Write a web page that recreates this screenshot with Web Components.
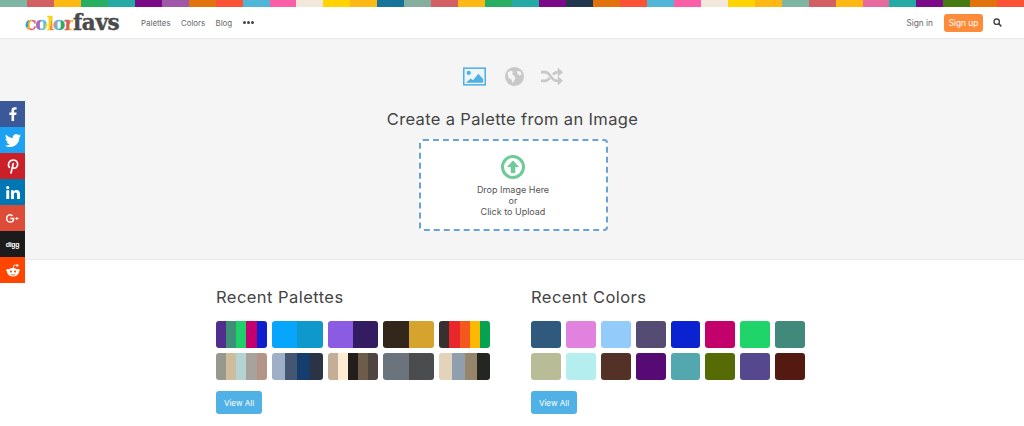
<!DOCTYPE html>
<html lang="en"><head><meta charset="utf-8"><title>colorfavs</title>
<style>
html,body{margin:0;padding:0;background:#fff;font-family:Inter,"Liberation Sans",sans-serif;color:#555}
</style></head><body>
<color-bar></color-bar>
<site-nav></site-nav>
<social-rail></social-rail>
<hero-panel></hero-panel>
<recent-area>
  <recent-block heading="Recent Palettes" cols="5">
    <palette-chip colors="#512d8e,#3f8e78,#1fd06a,#c4006f,#0f1fd0"></palette-chip>
    <palette-chip colors="#07a5fb,#0e98cc"></palette-chip>
    <palette-chip colors="#8c5be3,#341c63"></palette-chip>
    <palette-chip colors="#33261a,#d6a32f"></palette-chip>
    <palette-chip colors="#38302e,#e8262b,#f4581f,#fdb900,#05a350"></palette-chip>
    <palette-chip colors="#97998f,#cdbd9d,#b5d3d0,#a8a29d,#b59488"></palette-chip>
    <palette-chip colors="#9eafc7,#435772,#153e6e,#2a3444"></palette-chip>
    <palette-chip colors="#c4ae96,#fbecd3,#211e1c,#6e5c4b,#4f4441"></palette-chip>
    <palette-chip colors="#6b747c,#4a4c4e"></palette-chip>
    <palette-chip colors="#e3d3bb,#909fad,#96856a,#242622"></palette-chip>
  </recent-block>
  <recent-block heading="Recent Colors" cols="8">
    <palette-chip colors="#2f5a7e"></palette-chip>
    <palette-chip colors="#e282df"></palette-chip>
    <palette-chip colors="#93ccfa"></palette-chip>
    <palette-chip colors="#544c73"></palette-chip>
    <palette-chip colors="#0a22cf"></palette-chip>
    <palette-chip colors="#c4006c"></palette-chip>
    <palette-chip colors="#1fd469"></palette-chip>
    <palette-chip colors="#41897a"></palette-chip>
    <palette-chip colors="#b9bd97"></palette-chip>
    <palette-chip colors="#b5eeee"></palette-chip>
    <palette-chip colors="#543127"></palette-chip>
    <palette-chip colors="#560a74"></palette-chip>
    <palette-chip colors="#53a7ae"></palette-chip>
    <palette-chip colors="#566b05"></palette-chip>
    <palette-chip colors="#56488f"></palette-chip>
    <palette-chip colors="#541a12"></palette-chip>
  </recent-block>
</recent-area>
<script>
function def(name, html, init){
  customElements.define(name, class extends HTMLElement{
    connectedCallback(){
      if(this.shadowRoot) return;
      const r=this.attachShadow({mode:'open'});
      r.innerHTML=html;
      if(init) init.call(this,r);
    }
  });
}
def('color-bar',`<style>:host{display:flex;height:7px}i{flex:1 1 0;display:block}</style>`,function(r){
  const c=['#7fb5a3','#d25f62','#fdb813','#27ae60','#23aaa5','#7a0a88','#a058a8','#e2730c','#fb5236','#4fb6d8','#fb5fa8','#f1e7da','#ffd400','#fdb813','#14749c','#86ae9f','#d25f62','#fdb813','#27ae60','#23aaa5','#7a0a88','#22364d','#e2730c','#fb5236','#4fb6d8','#fb5fa8','#f1e7da','#ffd400','#fdb813','#7fb5a3','#d25f62','#fdb813','#e86a9c','#23aaa5','#7a0a88','#477a13','#e2730c','#fb5236'];
  c.forEach(x=>{const i=document.createElement('i');i.style.background=x;r.appendChild(i);});
});
def('site-nav',`<style>
:host{display:flex;align-items:center;height:31px;background:#fff;border-bottom:1px solid #e8e8e8;padding:0 22px 0 25px;font:8.300px Inter,"Liberation Sans",sans-serif;color:#666}
.logo{font:700 21.500px "DejaVu Serif",serif;letter-spacing:-.35px;color:#4a4a4a;width:116px;line-height:31px;white-space:nowrap;-webkit-text-stroke:.4px #4a4a4a}
.logo b{font-size:19px;letter-spacing:-1.250px;font-weight:700;-webkit-text-stroke:.4px transparent;background:linear-gradient(100deg,#2f9fd8 0 10%,#f2b01e 10% 16%,#e9577a 16% 26%,#a368c4 26% 34%,#5cc4e0 34% 44%,#f7d21a 44% 54%,#f08a3c 54% 62%,#6db1e0 62% 72%,#27ae60 72% 80%,#d25f62 80% 90%,#f2b01e 90%);-webkit-background-clip:text;background-clip:text;color:transparent}
a{color:#666;text-decoration:none}
.links{display:flex;gap:10.300px;align-items:center;font-size:7.900px}
.dots{display:flex;gap:1px;margin-left:1px}.dots i{width:3px;height:3px;border-radius:50%;background:#444}
.right{margin-left:auto;display:flex;align-items:center}
.up{background:#fd8b39;color:#fff;border-radius:3px;height:18px;width:39px;display:flex;align-items:center;justify-content:center;margin:0 10px 0 11px}
svg{display:block}
</style>
<div class="logo"><b>color</b>favs</div>
<div class="links"><a>Palettes</a><a>Colors</a><a>Blog</a><span class="dots"><i></i><i></i><i></i></span></div>
<div class="right"><a>Sign in</a><a class="up">Sign up</a>
<svg width="9" height="9" viewBox="0 0 8 8"><circle cx="3.300" cy="3.300" r="2.400" fill="none" stroke="#444" stroke-width="1.200"/><path d="M5 5l2.400 2.400" stroke="#444" stroke-width="1.400"/></svg></div>`);
def('social-rail',`<style>
:host{position:fixed;left:0;top:101px;width:25px;display:block}
div{height:26px;display:flex;align-items:center;justify-content:center;color:#fff}
span{font:700 7px "Liberation Sans",sans-serif;letter-spacing:-.3px}
</style>
<div style="background:#3b5998"><svg width="8" height="14" viewBox="0 0 8 14"><path fill="#fff" d="M2.500 14V8H.4V5.500h2.100V3.600C2.500 1.400 3.800.3 5.700.3c.9 0 1.700.1 1.900.1v2.200H6.300c-1 0-1.200.5-1.200 1.200v1.700h2.500L7.200 8H5.100v6z"/></svg></div>
<div style="background:#1da1f2"><svg width="16" height="13" viewBox="0 0 16 13"><path fill="#fff" d="M16 1.600c-.6.3-1.200.4-1.900.5.700-.4 1.200-1 1.400-1.800-.6.400-1.300.7-2.100.8A3.300 3.300 0 0 0 7.800 4.100C5.100 4 2.700 2.700 1.100.6.200 2.100.7 4 2.100 5c-.5 0-1-.2-1.500-.4 0 1.600 1.100 3 2.600 3.300-.5.100-1 .1-1.500 0 .4 1.300 1.600 2.200 3.100 2.300A6.600 6.600 0 0 1 0 11.500 9.300 9.300 0 0 0 14.400 3.300c.6-.5 1.200-1 1.600-1.700z"/></svg></div>
<div style="background:#cb2027"><svg width="12" height="15" viewBox="0 0 12 15"><path fill="none" stroke="#fff" stroke-width="1.700" stroke-linecap="round" d="M2.300 8.300C.8 6.500 1.200 1.200 6.200 1c4.300-.1 5 4 3.900 6.300-1 2.200-3.500 2.500-4.300 1M6.200 4.700L4 14"/></svg></div>
<div style="background:#0077b5"><svg width="14" height="13" viewBox="0 0 14 13"><path fill="#fff" d="M.3 4.300h2.900V13H.3zM1.700 0a1.600 1.600 0 1 1 0 3.200 1.600 1.600 0 0 1 0-3.200zM5 4.300h2.700v1.200c.5-.8 1.500-1.400 2.800-1.400 2.800 0 3.500 1.800 3.500 4.300V13h-2.900V8.800c0-1.200-.3-2.200-1.500-2.200S7.900 7.500 7.900 8.700V13H5z"/></svg></div>
<div style="background:#dd4b39"><svg width="13" height="9" viewBox="0 0 13 9"><path fill="none" stroke="#fff" stroke-width="1.500" d="M6.500 2C6 1.200 5.200.8 4.300.8a3.600 3.600 0 1 0 0 7.300c2 0 3.300-1.400 3.300-3.600H4.300"/><path stroke="#fff" d="M9.300 4.500h3.200M10.900 3v3"/></svg></div>
<div style="background:#1b1b1b"><span>digg</span></div>
<div style="background:#ff4500"><svg width="14" height="13" viewBox="0 0 14 13"><ellipse cx="7" cy="8.300" rx="5.800" ry="4.200" fill="#fff"/><circle cx="1.700" cy="6.300" r="1.400" fill="#fff"/><circle cx="12.300" cy="6.300" r="1.400" fill="#fff"/><circle cx="11.300" cy="1.400" r="1.200" fill="#fff"/><path d="M7 4.500L8 1l3 .5" stroke="#fff" fill="none" stroke-width=".8"/><circle cx="4.900" cy="7.500" r="1.100" fill="#ff4500"/><circle cx="9.100" cy="7.500" r="1.100" fill="#ff4500"/><path d="M4.700 10.300c1.300.9 3.300.9 4.600 0" stroke="#ff4500" fill="none" stroke-width=".8"/></svg></div>`);
def('hero-panel',`<style>
:host{display:flex;flex-direction:column;align-items:center;height:220px;background:#f5f5f5;border-bottom:1px solid #eaeaea}
.tabs{display:flex;align-items:center;margin:27px 0 0 2px;height:20px}
.tabs svg:nth-child(2){margin:0 17px 0 19px}
h1{margin:23px 0 0 1px;font:400 16.500px/20px Inter,"Liberation Sans",sans-serif;letter-spacing:.35px;color:#444;white-space:nowrap}
.drop{box-sizing:border-box;margin:10px 0 0 2px;width:189px;height:92px;background:#fff;border:2px dashed #67a3da;border-radius:4px;display:flex;flex-direction:column;align-items:center;padding-top:14px;font:9px/11px Inter,"Liberation Sans",sans-serif;color:#555;text-align:center}
.drop svg{margin-bottom:5px}
svg{display:block}
</style>
<div class="tabs">
<svg width="23" height="19" viewBox="0 0 24 19"><rect x=".8" y=".8" width="22.400" height="17.400" fill="#eef6fb" stroke="#4fb0e4" stroke-width="1.600"/><circle cx="6" cy="5.800" r="2.200" fill="#4fb0e4"/><path fill="#4fb0e4" d="M3 16l5-4.500 2.500 2L16 6.500 21 12v4z"/></svg>
<svg width="19" height="19" viewBox="0 0 19 19"><circle cx="9.500" cy="9.500" r="9.500" fill="#c8c8c8"/><path fill="#f5f5f5" d="M2.500 5.500L6 3.500l2 1.500-1 2 2 1.500 1.500 2.500-1.500 3-1.500 2-1-3.500-3-1.500zM12 4l3.500.5 1 3-2 1-2-1.500z"/></svg>
<svg width="22" height="19" viewBox="0 0 23 19"><path fill="none" stroke="#c8c8c8" stroke-width="2.800" d="M0 5h4c4 0 5 3 6.500 5s3 4 6.500 4h1M0 14h4c2.500 0 3.800-1.300 5-3M12.500 7.500C13.700 6 15 5 17.500 5h1"/><path fill="#c8c8c8" d="M17.500 0L23 5l-5.500 5zM17.500 9L23 14l-5.500 5z"/></svg>
</div>
<h1>Create a Palette from an Image</h1>
<div class="drop">
<svg width="24" height="24" viewBox="0 0 24 24"><circle cx="12" cy="12" r="10.500" fill="none" stroke="#6ccb98" stroke-width="3"/><path fill="#6ccb98" d="M12 5.500L18 12h-3.700v6H9.700v-6H6z"/></svg>
<div>Drop Image Here</div><div>or</div><div>Click to Upload</div>
</div>`);
def('recent-area',`<style>:host{display:flex;justify-content:flex-start;gap:41px;padding:27px 0 0 216px}</style><slot></slot>`);
def('recent-block',`<style>
:host{display:block;width:274px}
h2{margin:0 0 14px;font:400 16.500px/20px Inter,"Liberation Sans",sans-serif;letter-spacing:.45px;color:#444}
.g{display:grid;column-gap:5px;row-gap:5.500px}
a{display:flex;align-items:center;justify-content:center;width:46px;height:23px;margin-top:11.500px;background:#4fb1e6;color:#fff;border-radius:3px;font:8px Inter,"Liberation Sans",sans-serif}
</style><h2></h2><div class="g"><slot></slot></div><a>View All</a>`,function(r){
  r.querySelector('h2').textContent=this.getAttribute('heading');
  r.querySelector('.g').style.gridTemplateColumns=`repeat(${this.getAttribute('cols')},1fr)`;
});
def('palette-chip',`<style>:host{display:flex;height:26.500px;border-radius:3px;overflow:hidden}i{flex:1 1 0;display:block}</style>`,function(r){
  this.getAttribute('colors').split(',').forEach(x=>{const i=document.createElement('i');i.style.background=x;r.appendChild(i);});
});
</script>
</body></html>
